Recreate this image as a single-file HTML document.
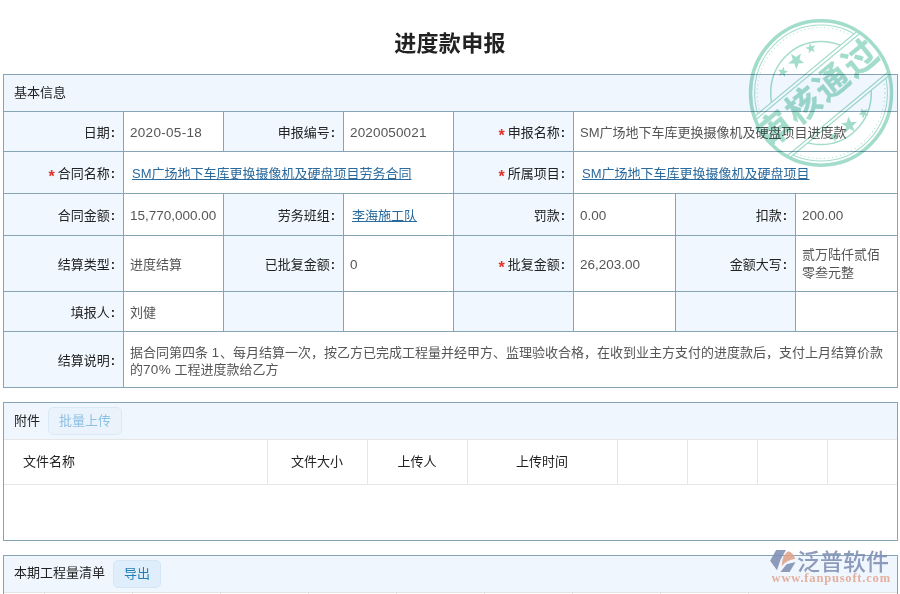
<!DOCTYPE html>
<html lang="zh-CN">
<head>
<meta charset="utf-8">
<title>进度款申报</title>
<style>
*{box-sizing:border-box;margin:0;padding:0}
html,body{width:900px;height:594px;overflow:hidden;background:#fff}
body{position:relative;font-family:"Liberation Sans","Noto Sans CJK SC",sans-serif;font-size:13px;color:#222}
.title{position:absolute;left:0;top:27px;width:900px;text-align:center;font-size:22px;font-weight:bold;color:#222;line-height:34px;letter-spacing:.3px}
table{border-collapse:collapse;table-layout:fixed}
.main{position:absolute;left:3px;top:74px;width:894px}
.main td{border:1px solid #87a3b6;vertical-align:middle;line-height:17px;font-size:13px}
.main td.h{background:#f0f6fd;padding-left:10px;padding-bottom:2px;color:#222}
.main td.l{background:#f0f7fe;text-align:right;padding-right:8px;padding-top:2px;color:#222;white-space:nowrap}
.main td.l i{font-style:normal;font-weight:bold;margin-left:1px}
.main td.v{background:#fff;padding-left:6px;color:#555}
.main td.c{padding-top:2px}
.main td.n{font-size:13.5px;padding-top:2px}
.main td.v a{margin-left:2px}
.main td.e{background:#f0f7fe}
.req{color:#e2332b;margin-right:3px;font-size:16px;font-weight:bold;position:relative;top:4px;line-height:1px}
a{color:#2b6a9d;text-decoration:underline}
.panel{position:absolute;left:3px;width:895px;border:1px solid #87a3b6;background:#fff}
.phead{height:36px;background:#f0f6fd;line-height:35px;padding-left:10px;color:#222;white-space:nowrap}
.btn{position:absolute;height:28px;line-height:26px;border:1px solid #d3e6f5;background:#e0eefb;border-radius:5px;text-align:center;color:#1f7fb6}
.btn.dis{color:#8dc0e2;background:#eaf3fc;border-color:#dbe9f6}
.att{width:893px}
.att td{height:45px;padding-bottom:3px;border-right:1px solid #e6e6e6;border-bottom:1px solid #e6e6e6;border-top:1px solid #e6e6e6;text-align:center;color:#222;font-size:13px}
.att td:first-child{text-align:left;padding-left:19px}
.att td:last-child{border-right:none}
.grid{position:absolute;left:4px;top:592px;width:893px;height:2px;border-top:1px solid #e4e4e4;background:#fff}
.grid i{position:absolute;top:0;width:1px;height:2px;background:#e4e4e4}
</style>
</head>
<body>
<div class="title">进度款申报</div>

<table class="main">
<colgroup><col style="width:120px"><col style="width:100px"><col style="width:120px"><col style="width:110px"><col style="width:120px"><col style="width:102px"><col style="width:120px"><col style="width:102px"></colgroup>
<tr style="height:37px"><td class="h" colspan="8">基本信息</td></tr>
<tr style="height:40px"><td class="l">日期<i>:</i></td><td class="v n" style="letter-spacing:.3px">2020-05-18</td><td class="l">申报编号<i>:</i></td><td class="v n" style="letter-spacing:.15px">2020050021</td><td class="l"><span class="req">*</span>申报名称<i>:</i></td><td class="v c" colspan="3">SM广场地下车库更换摄像机及硬盘项目进度款</td></tr>
<tr style="height:42px"><td class="l"><span class="req">*</span>合同名称<i>:</i></td><td class="v c" colspan="3"><a>SM广场地下车库更换摄像机及硬盘项目劳务合同</a></td><td class="l"><span class="req">*</span>所属项目<i>:</i></td><td class="v c" colspan="3"><a>SM广场地下车库更换摄像机及硬盘项目</a></td></tr>
<tr style="height:42px"><td class="l">合同金额<i>:</i></td><td class="v n">15,770,000.00</td><td class="l">劳务班组<i>:</i></td><td class="v c"><a>李海施工队</a></td><td class="l">罚款<i>:</i></td><td class="v n">0.00</td><td class="l">扣款<i>:</i></td><td class="v n">200.00</td></tr>
<tr style="height:56px"><td class="l">结算类型<i>:</i></td><td class="v c">进度结算</td><td class="l">已批复金额<i>:</i></td><td class="v n">0</td><td class="l"><span class="req">*</span>批复金额<i>:</i></td><td class="v n">26,203.00</td><td class="l">金额大写<i>:</i></td><td class="v c" style="line-height:18px;padding-top:1px">贰万陆仟贰佰<br>零叁元整</td></tr>
<tr style="height:40px"><td class="l">填报人<i>:</i></td><td class="v c">刘健</td><td class="e"></td><td class="v"></td><td class="e"></td><td class="v"></td><td class="e"></td><td class="v"></td></tr>
<tr style="height:56px"><td class="l">结算说明<i>:</i></td><td class="v c" colspan="7">据合同第四条 <span style="letter-spacing:1.2px">1</span>、每月结算一次，按乙方已完成工程量并经甲方、监理验收合格，在收到业主方支付的进度款后，支付上月结算价款<br>的<span style="font-size:13.5px;letter-spacing:.3px">70%</span> 工程进度款给乙方</td></tr>
</table>

<div class="panel" style="top:402px;height:139px">
  <div class="phead">附件</div>
  <span class="btn dis" style="left:44px;top:4px;width:74px">批量上传</span>
  <table class="att">
  <colgroup><col style="width:263px"><col style="width:100px"><col style="width:100px"><col style="width:150px"><col style="width:70px"><col style="width:70px"><col style="width:70px"><col></colgroup>
  <tr><td>文件名称</td><td>文件大小</td><td>上传人</td><td>上传时间</td><td></td><td></td><td></td><td></td></tr>
  </table>
</div>

<div class="panel" style="top:555px;height:60px">
  <div class="phead" style="line-height:33px">本期工程量清单</div>
  <span class="btn" style="left:109px;top:4px;width:48px">导出</span>
</div>
<div class="grid"><i style="left:40px"></i><i style="left:128px"></i><i style="left:216px"></i><i style="left:304px"></i><i style="left:392px"></i><i style="left:480px"></i><i style="left:568px"></i><i style="left:656px"></i><i style="left:744px"></i></div>

<svg class="stamp" width="160" height="164" viewBox="-80 -82 160 164" style="position:absolute;left:741.2px;top:11.400000000000006px;mix-blend-mode:multiply">
<defs><clipPath id="cb"><path d="M-80,-80H80V80H-80Z M-80,-24 V29.5 H80 V-24Z" clip-rule="evenodd" transform="rotate(-39)"/></clipPath></defs>
<g transform="scale(1,1.025)">
<g fill="none" stroke="#a2dccb">
<circle r="70.5" stroke-width="3.5"/>
<g clip-path="url(#cb)">
<circle r="66.4" stroke-width="1"/>
<circle r="63.9" stroke-width="1" stroke-dasharray="0.9 3.1"/>
<circle r="50.3" stroke-width="1.5"/>
</g>
<g transform="rotate(-39)" stroke-width="1.2"><line x1="-65.2" y1="-24.0" x2="65.2" y2="-24.0"/><line x1="-66.3" y1="-20.8" x2="66.3" y2="-20.8"/><line x1="-64.3" y1="26.3" x2="64.3" y2="26.3"/><line x1="-62.9" y1="29.5" x2="62.9" y2="29.5"/></g>
</g>
<g fill="#a2dccb"><polygon points="-43.0,-22.9 -39.2,-22.4 -37.3,-25.7 -36.6,-22.0 -32.9,-21.1 -36.2,-19.3 -35.8,-15.5 -38.6,-18.2 -42.1,-16.7 -40.4,-20.1"/><polygon points="-30.0,-38.2 -24.9,-35.1 -20.1,-38.6 -21.5,-32.8 -16.7,-29.3 -22.6,-28.8 -24.5,-23.2 -26.8,-28.7 -32.7,-28.7 -28.2,-32.6"/><polygon points="-11.4,-48.9 -9.3,-45.7 -5.6,-46.4 -7.9,-43.4 -6.1,-40.1 -9.7,-41.4 -12.3,-38.6 -12.1,-42.4 -15.6,-44.1 -11.9,-45.1"/><polygon points="47.4,21.9 43.6,21.6 41.9,25.0 41.0,21.3 37.2,20.7 40.4,18.7 39.9,14.9 42.8,17.3 46.2,15.6 44.7,19.2"/><polygon points="33.8,37.6 28.6,34.9 24.0,38.7 25.0,32.8 20.0,29.6 25.8,28.8 27.3,23.0 30.0,28.3 35.9,28.0 31.6,32.1"/><polygon points="14.4,47.8 12.1,44.7 8.4,45.7 10.5,42.5 8.5,39.3 12.1,40.4 14.6,37.5 14.7,41.3 18.2,42.7 14.6,44.0"/></g>
<text transform="rotate(-39)" x="-2" y="10.5" text-anchor="middle" font-family="'Noto Sans CJK SC',sans-serif" font-weight="700" font-size="34" letter-spacing="2.6" fill="#a2dccb" stroke="#a2dccb" stroke-width="0.3">审核通过</text>
</g>
</svg>
<svg class="logo" width="135" height="50" viewBox="765 543 135 50" style="position:absolute;left:765px;top:543px;opacity:.88">
<polygon points="770.1,560.8 776.1,550.1 786,550.1 780.6,559.5 777,570.3" fill="#7f8fb4"/>
<path d="M782,566.2 C781.6,558.5 784.5,553 788.8,551.2 C792,552.6 794.4,555.4 795.2,558.8 C789.5,559.6 784.8,562 782,566.2Z" fill="#e0a28b"/>
<polygon points="780.4,572 789.6,572 795.6,562 786.6,564.3" fill="#7f8fb4"/>
<text x="797" y="569.6" font-family="'Liberation Sans','Noto Sans CJK SC',sans-serif" font-weight="500" font-size="23" fill="#7f8fb4" textLength="92">泛普软件</text>
<text x="771.6" y="581.8" font-family="'Liberation Serif',serif" font-weight="bold" font-size="12.5" fill="#e3a692" textLength="118.5">www.fanpusoft.com</text>
</svg>
</body>
</html>
